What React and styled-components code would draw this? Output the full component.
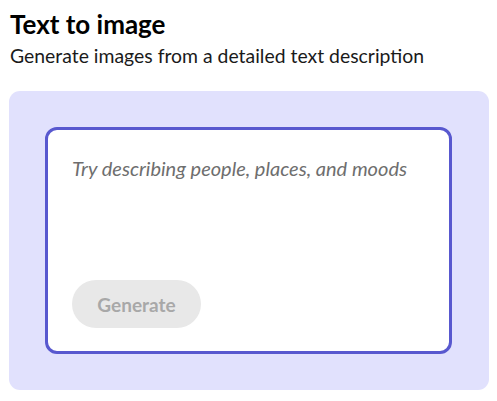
import React from "react";
import styled, { createGlobalStyle } from "styled-components";

const GlobalStyle = createGlobalStyle`
  body {
    margin: 0;
    background: #ffffff;
    font-family: Lato, "Noto Sans", sans-serif;
  }
`;

const Page = styled.div`
  padding: 9px 8px 0 9px;
  width: 480px;
`;

const Title = styled.h1`
  margin: 0 0 0 1px;
  font-size: 26px;
  line-height: 30px;
  font-weight: 700;
  color: #000000;
`;

const Subtitle = styled.p`
  margin: 4px 0 0 1px;
  font-size: 19.4px;
  line-height: 26px;
  color: #1a1a1a;
`;

const Panel = styled.div`
  margin-top: 22px;
  padding: 36px 37px 36px 36px;
  background: #e1e1fd;
  border-radius: 11px;
`;

const Card = styled.div`
  height: 227px;
  box-sizing: border-box;
  border: 3px solid #5858cf;
  border-radius: 12px;
  background: #ffffff;
  padding: 24px 24px 23px 24px;
  display: flex;
  flex-direction: column;
  justify-content: space-between;
  align-items: flex-start;
`;

const Placeholder = styled.div`
  font-size: 20px;
  font-style: italic;
  color: #6e6e6e;
  line-height: 28px;
`;

const GenerateButton = styled.button`
  height: 48px;
  width: 129px;
  border: none;
  border-radius: 24px;
  background: #e8e8e8;
  color: #a8a8a8;
  font-family: inherit;
  font-size: 19px;
  font-weight: 700;
  cursor: default;
`;

const App = () => {
  return (
    <Page>
      <GlobalStyle />
      <Title>Text to image</Title>
      <Subtitle>Generate images from a detailed text description</Subtitle>
      <Panel>
        <Card>
          <Placeholder>Try describing people, places, and moods</Placeholder>
          <GenerateButton disabled>Generate</GenerateButton>
        </Card>
      </Panel>
    </Page>
  );
};

export default App;
